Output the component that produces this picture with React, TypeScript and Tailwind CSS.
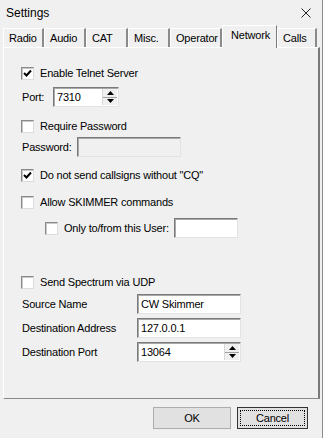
import React from "react";

const font = { fontFamily: '"Liberation Sans", Arial, sans-serif' };

function Check({ checked }: { checked?: boolean }) {
  return (
    <div className="w-[13px] h-[13px] shrink-0 bg-white border border-t-[#8a8a8a] border-l-[#8a8a8a] border-r-[#dcdcdc] border-b-[#dcdcdc] shadow-[inset_1px_1px_0_#c8c8c8] flex items-center justify-center">
      {checked && (
        <svg width="9" height="9" viewBox="0 0 9 9">
          <path d="M1 4 L3.5 6.5 L8 1.5" stroke="#000" strokeWidth="2" fill="none" />
        </svg>
      )}
    </div>
  );
}

function Spinner() {
  return (
    <div className="absolute right-[1px] top-[1px] bottom-[1px] w-[15px] flex flex-col border-l border-[#d8d8d8] bg-[#f0f0f0]">
      <div className="flex-1 flex items-center justify-center border-b border-[#a0a0a0]">
        <svg width="7" height="4" viewBox="0 0 7 4"><path d="M0 4 L3.5 0 L7 4 Z" fill="#000" /></svg>
      </div>
      <div className="flex-1 flex items-center justify-center">
        <svg width="7" height="4" viewBox="0 0 7 4"><path d="M0 0 L3.5 4 L7 0 Z" fill="#000" /></svg>
      </div>
    </div>
  );
}

function Field({ value, w, disabled, spin }: { value?: string; w: string; disabled?: boolean; spin?: boolean }) {
  return (
    <div
      className={`relative h-[20px] shrink-0 ${w} ${disabled ? "bg-[#f0f0f0]" : "bg-white"} border border-t-[#7a7a7a] border-l-[#7a7a7a] border-r-[#e3e3e3] border-b-[#e3e3e3] shadow-[inset_1px_1px_0_#a8a8a8] flex items-center pl-[3px] text-[11px] text-black`}
    >
      {value}
      {spin && <Spinner />}
    </div>
  );
}

function CheckRow({ label, checked, mt }: { label: string; checked?: boolean; mt: string }) {
  return (
    <div className={`${mt} h-[15px] flex items-center gap-[6px] pl-[17px]`}>
      <Check checked={checked} />
      <span className="text-[11px] text-black leading-none">{label}</span>
    </div>
  );
}

const tabs = [
  { t: "Radio", w: "w-[41px]" },
  { t: "Audio", w: "w-[42px]" },
  { t: "CAT", w: "w-[42px]" },
  { t: "Misc.", w: "w-[42px]" },
  { t: "Operator", w: "w-[52px]" },
  { t: "Network", w: "w-[55px]", sel: true },
  { t: "Calls", w: "w-[40px]" },
];

export default function App() {
  return (
    <div style={font} className="w-[323px] h-[438px] bg-[#f0f0f0] flex flex-col overflow-hidden border-r border-[#8c8c8c] text-black tracking-[-0.2px]">
      {/* title bar */}
      <div className="h-[26px] flex items-center justify-between pl-[6px] pr-[11px] shrink-0">
        <span className="text-[12px] leading-none tracking-normal">Settings</span>
        <svg width="10" height="10" viewBox="0 0 10 10">
          <path d="M0.5 0.5 L9.5 9.5 M9.5 0.5 L0.5 9.5" stroke="#222" strokeWidth="1" />
        </svg>
      </div>
      {/* tabs */}
      <div className="h-[21px] flex items-end pl-[3px] shrink-0 relative z-10">
        {tabs.map((tb) =>
          tb.sel ? (
            <div
              key={tb.t}
              className={`${tb.w} h-[23px] -mb-[1px] bg-[#f0f0f0] border-t border-l border-white border-r border-r-[#7a7a7a] flex items-start pt-[4px] pl-[8px] text-[11px] leading-none`}
            >
              {tb.t}
            </div>
          ) : (
            <div
              key={tb.t}
              className={`${tb.w} h-[19px] bg-[#f0f0f0] border-t border-l border-white border-r-2 border-r-[#8a8a8a] flex items-center pl-[5px] text-[11px] leading-none`}
            >
              {tb.t}
            </div>
          )
        )}
      </div>
      {/* panel */}
      <div className="ml-[3px] w-[317px] h-[352px] shrink-0 border-t border-l border-white border-r-2 border-r-[#7a7a7a] border-b border-b-[#8a8a8a] flex flex-col">
        <CheckRow mt="mt-[18px]" label="Enable Telnet Server" checked />
        <div className="mt-[6px] flex items-center pl-[18px]">
          <span className="text-[11px] w-[31px]">Port:</span>
          <Field value="7310" w="w-[66px]" spin />
        </div>
        <CheckRow mt="mt-[12px]" label="Require Password" />
        <div className="mt-[3px] flex items-center pl-[18px]">
          <span className="text-[11px] w-[55px]">Password:</span>
          <Field w="w-[104px]" disabled />
        </div>
        <CheckRow mt="mt-[11px]" label={'Do not send callsigns without "CQ"'} checked />
        <CheckRow mt="mt-[12px]" label="Allow SKIMMER commands" />
        <div className="mt-[8px] h-[20px] flex items-center pl-[41px]">
          <Check />
          <span className="text-[11px] ml-[6px] w-[110px] whitespace-nowrap">Only to/from this User:</span>
          <Field w="w-[64px]" />
        </div>
        <CheckRow mt="mt-[37px]" label="Send Spectrum via UDP" />
        <div className="mt-[4px] flex items-center pl-[18px]">
          <span className="text-[11px] w-[115px]">Source Name</span>
          <Field value="CW Skimmer" w="w-[104px]" />
        </div>
        <div className="mt-[4px] flex items-center pl-[18px]">
          <span className="text-[11px] w-[115px]">Destination Address</span>
          <Field value="127.0.0.1" w="w-[104px]" />
        </div>
        <div className="mt-[4px] flex items-center pl-[18px]">
          <span className="text-[11px] w-[115px]">Destination Port</span>
          <Field value="13064" w="w-[104px]" spin />
        </div>
      </div>
      {/* buttons */}
      <div className="mt-[8px] flex justify-end gap-[6px] pr-[14px]">
        <div className="w-[78px] h-[22px] bg-[#e1e1e1] border border-[#adadad] flex items-center justify-center text-[11px]">
          OK
        </div>
        <div className="w-[71px] h-[22px] bg-[#e1e1e1] border border-[#333] flex items-center justify-center text-[11px] p-[2px]">
          <div className="w-full h-full border border-dotted border-black flex items-center justify-center">Cancel</div>
        </div>
      </div>
    </div>
  );
}
